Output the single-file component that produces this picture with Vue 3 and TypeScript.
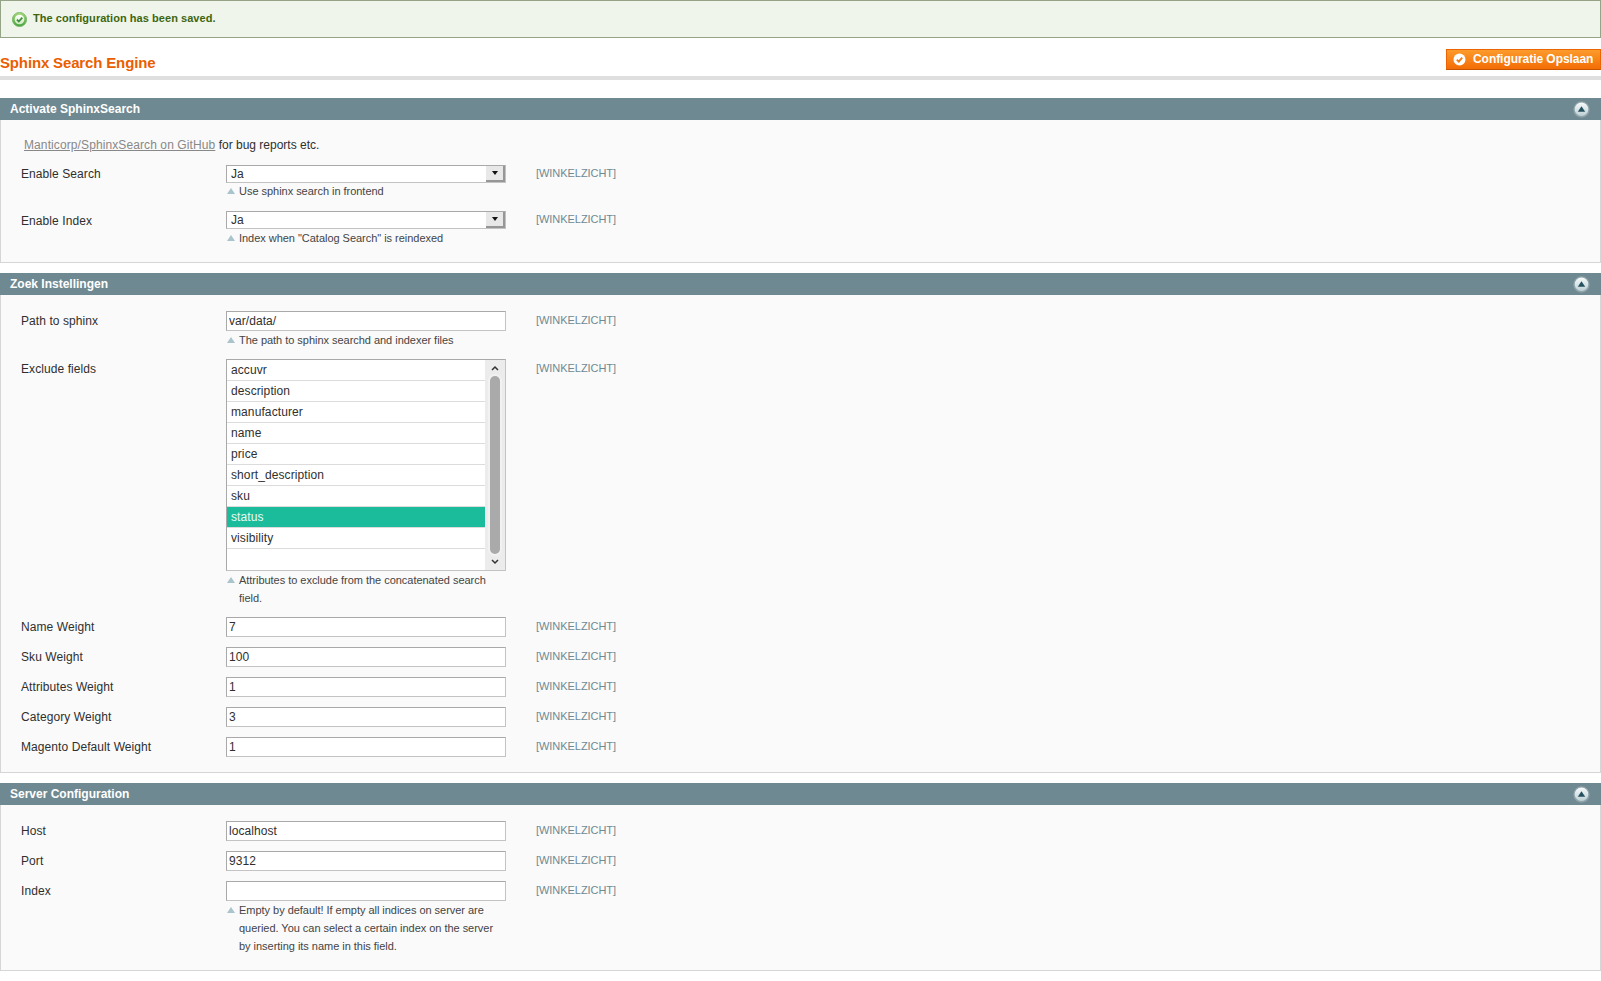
<script setup lang="ts">
interface Field {
  label: string;
  kind: "select" | "input" | "list";
  value?: string;
  note?: string;
}

interface Section {
  title: string;
  fields: Field[];
  link?: boolean;
}

const sections: Section[] = [
  {
    title: "Activate SphinxSearch",
    link: true,
    fields: [
      { label: "Enable Search", kind: "select", value: "Ja", note: "Use sphinx search in frontend" },
      { label: "Enable Index", kind: "select", value: "Ja", note: 'Index when "Catalog Search" is reindexed' },
    ],
  },
  {
    title: "Zoek Instellingen",
    fields: [
      { label: "Path to sphinx", kind: "input", value: "var/data/", note: "The path to sphinx searchd and indexer files" },
      { label: "Exclude fields", kind: "list", note: "Attributes to exclude from the concatenated search field." },
      { label: "Name Weight", kind: "input", value: "7" },
      { label: "Sku Weight", kind: "input", value: "100" },
      { label: "Attributes Weight", kind: "input", value: "1" },
      { label: "Category Weight", kind: "input", value: "3" },
      { label: "Magento Default Weight", kind: "input", value: "1" },
    ],
  },
  {
    title: "Server Configuration",
    fields: [
      { label: "Host", kind: "input", value: "localhost" },
      { label: "Port", kind: "input", value: "9312" },
      {
        label: "Index",
        kind: "input",
        value: "",
        note: "Empty by default! If empty all indices on server are queried. You can select a certain index on the server by inserting its name in this field.",
      },
    ],
  },
];

const excludeOptions = ["accuvr", "description", "manufacturer", "name", "price", "short_description", "sku", "status", "visibility"];
</script>

<template>
  <div class="page">
    <div class="message">
      <svg class="message-icon" width="15" height="15" viewBox="0 0 15 15">
        <defs>
          <linearGradient id="okGrad" x1="0" y1="0" x2="0" y2="1">
            <stop offset="0" stop-color="#a8dc78" />
            <stop offset="1" stop-color="#45a53f" />
          </linearGradient>
          <linearGradient id="okInner" x1="0" y1="0" x2="0" y2="1">
            <stop offset="0" stop-color="#ffffff" />
            <stop offset="1" stop-color="#cfe8c2" />
          </linearGradient>
        </defs>
        <circle cx="7.5" cy="7.5" r="7.1" fill="url(#okGrad)" stroke="#6aa95a" stroke-width="0.7" />
        <circle cx="7.5" cy="7.5" r="4.8" fill="url(#okInner)" />
        <path d="M4.9 7.6l1.9 1.9L10.3 5.7" fill="none" stroke="#3f8f3a" stroke-width="1.8" />
      </svg>
      <span>The configuration has been saved.</span>
    </div>

    <div class="page-head">
      <h3 class="page-title">Sphinx Search Engine</h3>
      <button class="save-btn" type="button">
        <svg width="13" height="13" viewBox="0 0 13 13">
          <circle cx="6.5" cy="6.5" r="6" fill="#fff" />
          <path d="M3.8 6.6l2 2L9.2 4.6" fill="none" stroke="#ee7a16" stroke-width="1.8" />
        </svg>
        <span>Configuratie Opslaan</span>
      </button>
    </div>

    <section v-for="section in sections" :key="section.title" class="section">
      <div class="section-head">
        <span>{{ section.title }}</span>
        <svg class="collapse" width="17" height="17" viewBox="0 0 17 17">
          <defs>
            <linearGradient id="colGrad" x1="0" y1="0" x2="0" y2="1">
              <stop offset="0" stop-color="#f8fbfb" />
              <stop offset="1" stop-color="#bdd0d4" />
            </linearGradient>
          </defs>
          <circle cx="8.5" cy="8.5" r="8.2" fill="#fff" fill-opacity="0.22" />
          <circle cx="8.5" cy="8.2" r="6.8" fill="url(#colGrad)" />
          <path d="M8.5 5.2L12.2 10.8H4.8Z" fill="#25505f" />
        </svg>
      </div>

      <div class="section-body" :class="{ 'has-link': section.link }">
        <p v-if="section.link" class="intro">
          <a href="#" class="intro-link">Manticorp/SphinxSearch on GitHub</a> for bug reports etc.
        </p>

        <div v-for="field in section.fields" :key="field.label" class="row" :class="'row-' + field.kind">
          <label class="label">{{ field.label }}</label>

          <div class="value">
            <div v-if="field.kind === 'select'" class="select">
              <span class="select-text">{{ field.value }}</span>
              <span class="select-btn"><i></i></span>
            </div>

            <input v-else-if="field.kind === 'input'" class="text" type="text" :value="field.value" />

            <div v-else class="list">
              <ul class="options">
                <li v-for="opt in excludeOptions" :key="opt" :class="{ selected: opt === 'status' }">{{ opt }}</li>
              </ul>
              <div class="scrollbar">
                <svg width="20" height="12" viewBox="0 0 20 12">
                  <path d="M7 8l3-3 3 3" fill="none" stroke="#333" stroke-width="1.5" />
                </svg>
                <div class="thumb"></div>
                <svg width="20" height="12" viewBox="0 0 20 12">
                  <path d="M7 4l3 3 3-3" fill="none" stroke="#333" stroke-width="1.5" />
                </svg>
              </div>
            </div>

            <p v-if="field.note" class="note">{{ field.note }}</p>
          </div>

          <div class="scope">[WINKELZICHT]</div>
        </div>
      </div>
    </section>
  </div>
</template>

<style>
html,
body {
  margin: 0;
  background: #fff;
}
</style>

<style scoped>
.page {
  font-family: "Liberation Sans", Arial, sans-serif;
  font-size: 12px;
  color: #2f2f2f;
  padding-bottom: 10px;
}

.message {
  box-sizing: border-box;
  height: 38px;
  display: flex;
  align-items: center;
  gap: 6px;
  padding: 0 0 0 11px;
  border: 1px solid #95a486;
  background: #eff5ea;
  color: #3d6611;
  font-size: 11px;
  font-weight: bold;
}

.message-icon {
  flex: none;
  margin-top: 1px;
}

.message span {
  margin-top: -2px;
  letter-spacing: 0.05px;
}

.page-head {
  box-sizing: border-box;
  height: 42px;
  display: flex;
  justify-content: space-between;
  border-bottom: 4px solid #dfdfdf;
}

.page-title {
  margin: 16px 0 0;
  font-size: 15px;
  line-height: 18px;
  font-weight: bold;
  letter-spacing: -0.15px;
  color: #eb5e00;
}

.save-btn {
  box-sizing: border-box;
  width: 155px;
  height: 21px;
  margin-top: 11px;
  padding: 0 0 2px 6px;
  display: flex;
  align-items: center;
  gap: 7px;
  border: 1px solid #ed6502;
  border-bottom-color: #c65500;
  background: linear-gradient(#fd9b2c, #f36c05);
  color: #fff;
  font-family: inherit;
  font-size: 12px;
  font-weight: bold;
  letter-spacing: -0.05px;
}

.save-btn svg {
  margin-top: 2px;
}

.section {
  margin-top: 10px;
}

.page-head + .section {
  margin-top: 18px;
}

.section-head {
  height: 22px;
  display: flex;
  align-items: center;
  justify-content: space-between;
  padding: 0 11px 0 10px;
  background: #6f8992;
  color: #fff;
  font-weight: bold;
}

.section-body {
  padding: 16px 0 15px 20px;
  border: 1px solid #d6d6d6;
  border-top: 0;
  background: #fafafa;
}

.section-body.has-link {
  padding-top: 0;
}

.intro {
  margin: 0 0 13px;
  padding: 18px 0 0 3px;
  line-height: 14px;
}

.intro-link {
  color: #888;
  letter-spacing: 0.1px;
}

.row {
  display: grid;
  grid-template-columns: 205px 280px auto;
  margin-top: 10px;
}

.row:first-child,
.intro + .row {
  margin-top: 0;
}

.label {
  line-height: 20px;
  letter-spacing: 0.08px;
}

.row-select .label {
  line-height: 18px;
}

.row-select:last-child .label {
  line-height: 20px;
}

.row-list .label {
  line-height: 21px;
}

.scope {
  padding-left: 30px;
  font-size: 11px;
  line-height: 18px;
  letter-spacing: -0.05px;
  color: #6f8992;
}

.row-select .scope {
  line-height: 16px;
}

.text {
  display: block;
  box-sizing: border-box;
  width: 280px;
  height: 20px;
  margin: 0;
  padding: 0 2px;
  border: 1px solid #c3c3c3;
  border-top-color: #a9a9a9;
  border-left-color: #a9a9a9;
  background: #fff;
  font-family: inherit;
  font-size: 12px;
  letter-spacing: 0.05px;
  color: #2f2f2f;
  outline: none;
}

.select {
  box-sizing: border-box;
  width: 280px;
  height: 18px;
  display: flex;
  justify-content: space-between;
  border: 1px solid #c3c3c3;
  border-top-color: #a9a9a9;
  border-left-color: #a9a9a9;
  background: #fff;
}

.select-text {
  padding-left: 4px;
  line-height: 16px;
}

.select-btn {
  box-sizing: border-box;
  width: 19px;
  height: 16px;
  display: flex;
  align-items: center;
  justify-content: center;
  border-right: 2px solid #969696;
  border-bottom: 2px solid #969696;
  background: #e8e8e8;
}

.select-btn i {
  width: 0;
  height: 0;
  border-left: 3.5px solid transparent;
  border-right: 3.5px solid transparent;
  border-top: 4px solid #111;
}

.list {
  box-sizing: border-box;
  width: 280px;
  height: 212px;
  display: flex;
  border: 1px solid #c3c3c3;
  border-top-color: #a9a9a9;
  border-left-color: #a9a9a9;
  background: #fff;
}

.options {
  flex: 1;
  margin: 0;
  padding: 0;
  list-style: none;
  letter-spacing: 0.1px;
}

.options li {
  box-sizing: border-box;
  height: 21px;
  padding-left: 4px;
  line-height: 20px;
  border-bottom: 1px solid #dcdcdc;
}

.options li.selected {
  background: #1abc9c;
  color: #e8fbf5;
}

.scrollbar {
  width: 20px;
  flex: none;
  display: flex;
  flex-direction: column;
  align-items: center;
  padding: 2px 0;
  box-sizing: border-box;
  background: #ececec;
}

.thumb {
  flex: 1;
  width: 10px;
  margin: 2px 0;
  border-radius: 5px;
  background: #aaa;
  box-shadow: 0 0 0 2px #f2f2f2;
}

.note {
  position: relative;
  margin: 0;
  padding-left: 13px;
  width: 262px;
  font-size: 11px;
  line-height: 18px;
  letter-spacing: -0.03px;
  color: #444;
}

.row-select .note {
  margin: -1px 0 1px;
}

.row-select:last-child .note {
  margin: 0;
}

.note::before {
  content: "";
  position: absolute;
  left: 1px;
  top: 6px;
  width: 0;
  height: 0;
  border-left: 4px solid transparent;
  border-right: 4px solid transparent;
  border-bottom: 6px solid #a9c4cc;
}
</style>
